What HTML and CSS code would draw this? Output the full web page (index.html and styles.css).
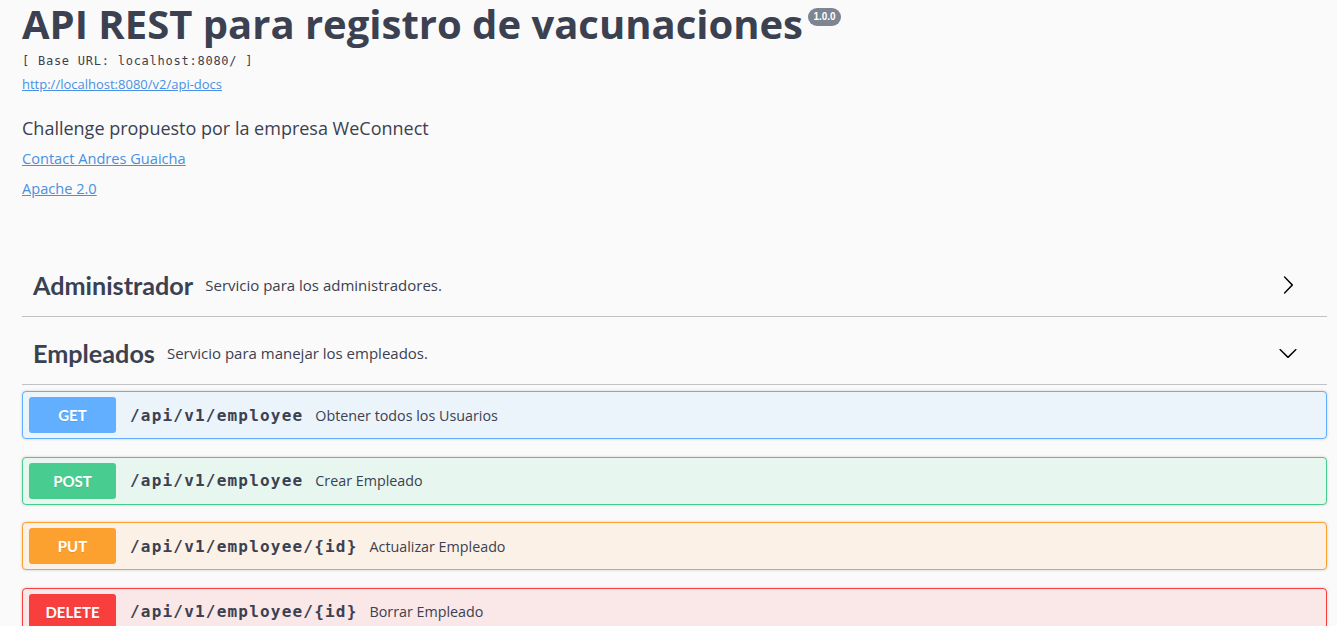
FILE: index.html
```html
<!DOCTYPE html>
<html lang="es">
<head>
<meta charset="utf-8">
<title>API REST para registro de vacunaciones</title>
<link rel="stylesheet" href="styles.css">
</head>
<body>
<div class="wrapper">
  <section class="info">
    <h2 class="title">API REST para registro de vacunaciones <span class="version">1.0.0</span></h2>
    <div class="base-url">[ Base URL: localhost:8080/ ]</div>
    <a class="api-link" href="#">http://localhost:8080/v2/api-docs</a>
    <p class="description">Challenge propuesto por la empresa WeConnect</p>
    <a class="info-link contact" href="#">Contact Andres Guaicha</a>
    <a class="info-link license" href="#">Apache 2.0</a>
  </section>

  <section class="tags">
    <div class="tag">
      <h3 class="tag-name">Administrador</h3>
      <span class="tag-desc">Servicio para los administradores.</span>
      <svg class="arrow" width="20" height="20" viewBox="0 0 20 20"><path d="M13.25 10L6.109 2.58a.697.697 0 0 1 0-.979.68.68 0 0 1 .969 0l7.83 7.908a.697.697 0 0 1 0 .979l-7.83 7.908a.68.68 0 0 1-.969 0 .697.697 0 0 1 0-.979L13.25 10z"/></svg>
    </div>
    <div class="tag">
      <h3 class="tag-name">Empleados</h3>
      <span class="tag-desc">Servicio para manejar los empleados.</span>
      <svg class="arrow" width="20" height="20" viewBox="0 0 20 20"><path d="M17.418 6.109c.272-.268.709-.268.979 0s.271.701 0 .969l-7.908 7.830c-.27.268-.707.268-.979 0l-7.908-7.830c-.27-.268-.27-.701 0-.969.271-.268.709-.268.979 0L10 13.25l7.418-7.141z"/></svg>
    </div>
    <div class="ops">
      <div class="op op-get">
        <span class="method">GET</span>
        <span class="path">/api/v1/employee</span>
        <span class="op-desc">Obtener todos los Usuarios</span>
      </div>
      <div class="op op-post">
        <span class="method">POST</span>
        <span class="path">/api/v1/employee</span>
        <span class="op-desc">Crear Empleado</span>
      </div>
      <div class="op op-put">
        <span class="method">PUT</span>
        <span class="path">/api/v1/employee/{id}</span>
        <span class="op-desc">Actualizar Empleado</span>
      </div>
      <div class="op op-delete">
        <span class="method">DELETE</span>
        <span class="path">/api/v1/employee/{id}</span>
        <span class="op-desc">Borrar Empleado</span>
      </div>
    </div>
  </section>
</div>
</body>
</html>
```

FILE: styles.css
```css
html, body {
  margin: 0;
  padding: 0;
  background: #fafafa;
  overflow: hidden;
}
body {
  font-family: "Open Sans", "Noto Sans", sans-serif;
  color: #3b4151;
}
.wrapper {
  padding: 0 10px 0 22px;
}
.info {
  display: flex;
  flex-direction: column;
  align-items: flex-start;
}
.title {
  margin: 0;
  font-size: 40px;
  line-height: 48px;
  font-weight: 700;
  color: #3b4151;
  white-space: nowrap;
}
.version {
  display: inline-block;
  vertical-align: top;
  margin-top: 8px;
  margin-left: -5px;
  padding: 0 5px;
  height: 18px;
  line-height: 18px;
  border-radius: 57px;
  background: #7d8492;
  color: #fff;
  font-family: "Liberation Sans", Arial, sans-serif;
  font-size: 10px;
  font-weight: 700;
}
.base-url {
  margin-top: 5px;
  font-family: "DejaVu Sans Mono", monospace;
  font-size: 12px;
  letter-spacing: 0.75px;
  line-height: 16px;
  color: #3b4151;
}
.api-link {
  margin-top: 7px;
  font-size: 13px;
  line-height: 17px;
  color: #4990e2;
}
.description {
  margin: 24px 0 0;
  font-size: 18px;
  line-height: 22px;
}
.info-link {
  font-size: 14.6px;
  line-height: 20px;
  color: #4990e2;
}
.contact { margin-top: 9px; }
.license { margin-top: 10px; }

.tags {
  margin-top: 56px;
}
.tag {
  display: flex;
  align-items: center;
  height: 62px;
  padding: 0 29px 0 11px;
  border-bottom: 1px solid rgba(59, 65, 81, 0.3);
  margin-bottom: 5px;
}
.tag-name {
  margin: 0;
  font-family: "Lato", sans-serif;
  font-size: 25.2px;
  font-weight: 700;
  color: #3b4151;
}
.tag-desc {
  flex: 1;
  margin-left: 12px;
  font-size: 15px;
  color: #3b4151;
}
.arrow {
  fill: #000;
}
.ops {
  padding-top: 1px;
}
.op {
  display: flex;
  align-items: center;
  height: 36px;
  padding: 5px 6px;
  border: 1px solid;
  border-radius: 4px;
  box-shadow: 0 0 3px rgba(0, 0, 0, 0.19);
  margin-bottom: 17.5px;
}
.method {
  width: 87px;
  height: 36px;
  line-height: 36px;
  border-radius: 3px;
  text-align: center;
  color: #fff;
  font-family: "Lato", sans-serif;
  font-weight: 700;
  font-size: 15px;
  text-shadow: 0 1px 0 rgba(0, 0, 0, 0.1);
}
.path {
  margin-left: 14px;
  font-family: "DejaVu Sans Mono", monospace;
  font-weight: 700;
  font-size: 16px;
  letter-spacing: 1.2px;
  color: #3b4151;
}
.op-desc {
  margin-left: 12px;
  font-size: 14.3px;
  color: #3b4151;
}
.op-get { background: #ebf3fb; border-color: #61affe; }
.op-get .method { background: #61affe; }
.op-post { background: #e8f6f0; border-color: #49cc90; }
.op-post .method { background: #49cc90; }
.op-put { background: #fbf1e6; border-color: #fca130; }
.op-put .method { background: #fca130; }
.op-delete { background: #fae7e7; border-color: #f93e3e; }
.op-delete .method { background: #f93e3e; }
```
